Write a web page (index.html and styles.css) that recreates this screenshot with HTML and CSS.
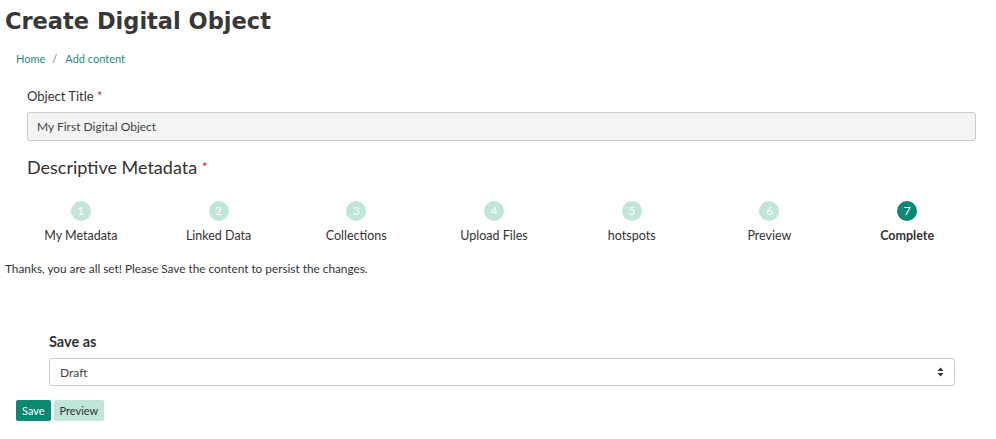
FILE: index.html
```html
<!DOCTYPE html>
<html>
<head>
<meta charset="utf-8">
<link rel="stylesheet" href="styles.css">
</head>
<body>
<h1 class="page-title">Create Digital Object</h1>
<nav class="breadcrumb"><a href="#">Home</a><span class="sep">/</span><a href="#">Add content</a></nav>
<div class="form">
  <div class="field">
    <label class="label">Object Title <span class="req">*</span></label>
    <div class="input">My First Digital Object</div>
  </div>
  <h2 class="section-title">Descriptive Metadata <span class="req">*</span></h2>
</div>
<ol class="stepper">
  <li class="step"><span class="dot">1</span><span class="step-label">My Metadata</span></li>
  <li class="step"><span class="dot">2</span><span class="step-label">Linked Data</span></li>
  <li class="step"><span class="dot">3</span><span class="step-label">Collections</span></li>
  <li class="step"><span class="dot">4</span><span class="step-label">Upload Files</span></li>
  <li class="step"><span class="dot">5</span><span class="step-label">hotspots</span></li>
  <li class="step"><span class="dot">6</span><span class="step-label">Preview</span></li>
  <li class="step active"><span class="dot">7</span><span class="step-label">Complete</span></li>
</ol>
<p class="done">Thanks, you are all set! Please Save the content to persist the changes.</p>
<div class="save-as">
  <div class="save-label">Save as</div>
  <div class="select"><span>Draft</span>
    <svg class="caret" width="7" height="10" viewBox="0 0 7 10"><path d="M3.5 0.5 L6.5 4 H0.5 Z M3.5 9.5 L6.5 6 H0.5 Z" fill="#333"/></svg>
  </div>
</div>
<div class="actions">
  <button class="btn btn-primary">Save</button>
  <button class="btn btn-light">Preview</button>
</div>
</body>
</html>
```
FILE: styles.css
```css
html, body { margin: 0; padding: 0; background: #fff; }
body { font-family: Lato, "Open Sans", sans-serif; color: #333; font-size: 12px; }
.page-title {
  font-family: "DejaVu Sans", sans-serif;
  font-weight: bold;
  font-size: 22.5px;
  color: #383838;
  margin: 0;
  padding: 6px 0 0 5px;
  line-height: 30px;
}
.breadcrumb { padding: 15px 0 0 16px; font-size: 11px; line-height: 16px; }
.breadcrumb a { color: #1e8c7c; text-decoration: none; }
.breadcrumb .sep { color: #777; margin: 0 8px 0 7px; }
.form { padding: 21px 20px 0 27px; }
.label { display: block; font-size: 13px; line-height: 16px; color: #333; margin-bottom: 8px; }
.req { color: #d0263b; }
.input {
  height: 27px; border: 1px solid #ccc; border-radius: 3px; background: #f3f4f4;
  padding: 0 9px; line-height: 27px; font-size: 12px; color: #444;
}
.section-title { font-weight: normal; font-size: 18px; line-height: 22px; margin: 15px 0 0; color: #333; }
.section-title .req { font-size: 14px; vertical-align: 2px; }
.stepper {
  list-style: none; margin: 0; padding: 0 20px 0 12px;
  display: grid; grid-template-columns: repeat(7, 1fr);
  margin-top: 23px;
}
.step { display: flex; flex-direction: column; align-items: center; }
.dot {
  width: 20px; height: 20px; border-radius: 50%; background: #bfe6d9; color: #fff;
  font-size: 12px; line-height: 20px; text-align: center;
}
.step-label { margin-top: 7px; font-size: 12.5px; line-height: 16px; color: #333; }
.step.active .dot { background: #0b8772; }
.step.active .step-label { font-weight: bold; }
.done { margin: 18px 0 0 5px; font-size: 11.8px; line-height: 14px; color: #333; }
.save-as { padding: 57px 41px 0 49px; }
.save-label { font-size: 14.5px; font-weight: bold; line-height: 18px; color: #333; margin-bottom: 7px; }
.select {
  height: 26px; border: 1px solid #ccc; border-radius: 3px; background: #fff;
  display: flex; align-items: center; justify-content: space-between;
  padding: 0 10px 0 10px; font-size: 12px; color: #444;
}
.actions { display: flex; gap: 3px; padding: 14px 0 0 16px; }
.btn {
  font-family: Lato, sans-serif; font-size: 11px; border: none; border-radius: 2px;
  height: 21px; padding: 0 6px; cursor: pointer;
}
.btn-primary { background: #0b8772; color: #fff; }
.btn-light { background: #bfe6d9; color: #333; }
```
